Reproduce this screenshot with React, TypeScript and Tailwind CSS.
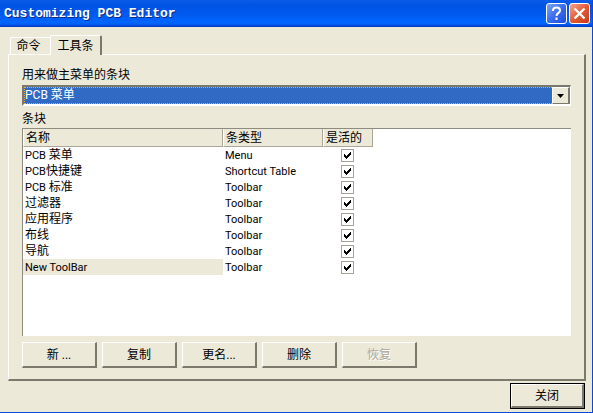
import { useState } from "react";

type Bar = { latin?: string; name?: string; type: string };

const bars: Bar[] = [
  { latin: "PCB ", name: "菜单", type: "Menu" },
  { latin: "PCB", name: "快捷键", type: "Shortcut Table" },
  { latin: "PCB ", name: "标准", type: "Toolbar" },
  { name: "过滤器", type: "Toolbar" },
  { name: "应用程序", type: "Toolbar" },
  { name: "布线", type: "Toolbar" },
  { name: "导航", type: "Toolbar" },
  { latin: "New ToolBar", type: "Toolbar" },
];

const raised =
  "h-[26px] w-[75px] border-t border-l border-r-2 border-b-2 border-t-white border-l-white border-r-[#7b796b] border-b-[#7b796b] bg-[#ece9d8] pt-px leading-4";

const headCell =
  "h-[18px] border-r border-b border-r-[#aca899] border-b-[#aca899] border-l border-l-white pt-px pr-0 pb-0 pl-[2px] text-left font-normal leading-4";

function Check({ label }: { label: string }) {
  const [on, setOn] = useState(true);
  return (
    <span className="relative block size-[13px]">
      <input
        type="checkbox"
        aria-label={label}
        checked={on}
        onChange={() => setOn(!on)}
        className="block size-[13px] appearance-none border border-[#a5a295] bg-white"
      />
      {on && (
        <svg viewBox="0 0 13 13" className="pointer-events-none absolute inset-0 size-[13px]" shapeRendering="crispEdges">
          <path d="M3 5h1v1h1v1h1v-1h1v-1h1v-1h1v-1h1v3h-1v1h-1v1h-1v1h-1v1h-1v-1h-1v-1h-1z" fill="#000" />
        </svg>
      )}
    </span>
  );
}

export default function App() {
  return (
    <div className="w-full border-r border-b border-[#0a48d8] bg-[#ece9d8] font-[Roboto,'Noto_Sans_CJK_SC',sans-serif] text-[12px] leading-4 text-black">
      <header className="flex h-[27px] items-center gap-[2px] bg-[linear-gradient(to_bottom,#0a5bea_0%,#0054e3_20%,#0058ee_50%,#0066ff_82%,#0060f5_90%,#0038b8_100%)] pr-[2px] pl-1">
        <h1 className="flex-1 font-['Liberation_Mono',monospace] text-[13px] font-bold text-white [text-shadow:1px_1px_#0a2a8a]">
          Customizing PCB Editor
        </h1>
        <button
          aria-label="Help"
          className="flex size-[21px] items-center justify-center rounded-[3px] border border-white bg-linear-to-br from-[#7da4f7] via-[#3a6cf0] to-[#1c4fd8]"
        >
          <svg viewBox="0 0 19 19" className="size-[19px]" fill="none" stroke="#fff" strokeWidth="2">
            <path d="M6 7V6.500C6 4.300 7.500 3.500 9.500 3.500S13 4.600 13 6.500C13 9 9.500 8.800 9.500 12M9.500 13.500V16" />
          </svg>
        </button>
        <button
          aria-label="Close window"
          className="flex size-[21px] items-center justify-center rounded-[3px] border border-white bg-linear-to-br from-[#f0a48c] via-[#e35a35] to-[#c43a12]"
        >
          <svg viewBox="0 0 19 19" className="size-[19px]" fill="none" stroke="#fff" strokeWidth="2.400">
            <path d="M4.500 4.500L14.500 14.500M14.500 4.500L4.500 14.500" />
          </svg>
        </button>
      </header>

      <main className="pt-2 pr-[6px] pb-[3px] pl-2">
        <div role="tablist" className="flex items-end pl-[2px]">
          <button
            role="tab"
            aria-selected="false"
            className="h-[17px] w-10 rounded-tl-[2px] border-t border-l border-white pr-1 text-center"
          >
            命令
          </button>
          <button
            role="tab"
            aria-selected="true"
            className="-mb-px h-5 w-[52px] rounded-t-[2px] border-t border-r-2 border-l border-t-white border-r-[#7b796b] border-l-white bg-[#ece9d8] text-center"
          >
            工具条
          </button>
        </div>

        <section className="border-t border-r-2 border-b-2 border-l border-t-white border-r-[#7b796b] border-b-[#7b796b] border-l-white px-[13px] pt-3 pb-[11px]">
          <label htmlFor="main-menu" className="block">
            用来做主菜单的条块
          </label>
          <div className="relative mt-[2px] border-t-2 border-r border-b-2 border-l-2 border-t-[#7b796b] border-r-white border-b-white border-l-[#7b796b]">
            <select
              id="main-menu"
              className="block h-[17px] w-full appearance-none border border-dotted border-[#e8b040] bg-[#316ac5] text-[12px] leading-[15px] text-white outline-none"
            >
              <option>PCB 菜单</option>
            </select>
            <span className="pointer-events-none absolute inset-y-0 right-0 flex w-[18px] items-center justify-center border-t border-r-2 border-b border-l border-t-white border-r-[#7b796b] border-b-[#7b796b] border-l-white bg-[#ece9d8]">
              <svg viewBox="0 0 7 4" className="h-1 w-[7px]">
                <path d="M0 0H7L3.500 4Z" />
              </svg>
            </span>
          </div>

          <h2 className="mt-[5px] font-normal">条块</h2>
          <div className="mt-px min-h-[208px] border-t border-l border-[#8e8c80] bg-white">
            <table className="w-[350px] table-fixed border-separate border-spacing-0">
              <colgroup>
                <col className="w-[200px]" />
                <col className="w-[100px]" />
                <col className="w-[50px]" />
              </colgroup>
              <thead className="bg-[#ece9d8]">
                <tr>
                  <th className={headCell}>名称</th>
                  <th className={headCell}>条类型</th>
                  <th className={headCell}>是活的</th>
                </tr>
              </thead>
              <tbody>
                {bars.map((bar, i) => (
                  <tr key={i}>
                    <td className={i === 7 ? "h-4 bg-[#ece9d8] p-0 pl-[2px]" : "h-4 p-0 pl-[2px]"}>
                      <div className="h-4 whitespace-pre">
                        <span className="text-[11px]">{bar.latin}</span>
                        {bar.name}
                      </div>
                    </td>
                    <td className="h-4 p-0 pl-[2px]">
                      <div className="h-4 text-[11px] leading-[18px]">{bar.type}</div>
                    </td>
                    <td className="h-4 p-0">
                      <div className="flex h-4 items-center justify-center pr-[2px]">
                        <Check label={(bar.latin ?? "") + (bar.name ?? "")} />
                      </div>
                    </td>
                  </tr>
                ))}
              </tbody>
            </table>
          </div>

          <div className="mt-[6px] flex gap-[5px]">
            <button className={raised}>新 ...</button>
            <button className={raised}>复制</button>
            <button className={raised}>更名...</button>
            <button className={raised}>删除</button>
            <button disabled className={raised + " text-[#aca899] [text-shadow:1px_1px_#fff]"}>
              恢复
            </button>
          </div>
        </section>

        <footer className="mt-[2px] flex justify-end pr-px">
          <button className="border border-black">
            <span className="block h-6 w-[73px] border-t border-r-2 border-b-2 border-l border-t-white border-r-[#7b796b] border-b-[#7b796b] border-l-white leading-[22px]">
              关闭
            </span>
          </button>
        </footer>
      </main>
    </div>
  );
}
